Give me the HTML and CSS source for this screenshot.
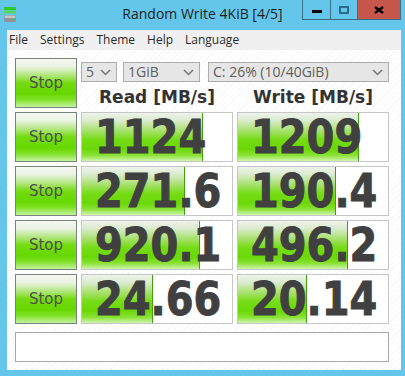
FILE: index.html
```html
<!DOCTYPE html>
<html lang="en">
<head>
    <meta charset="UTF-8">
    <title>Random Write 4KiB [4/5]</title>
    <link rel="stylesheet" href="styles.css">
</head>
<body>
<div class="titlebar">
    <div class="app-icon">
        <svg width="12" height="16" viewBox="0 0 12 16">
            <rect x="0" y="0" width="12" height="3" fill="#2ec92e"/>
            <rect x="0" y="3.5" width="12" height="3" fill="#5ad85a"/>
            <rect x="0" y="8" width="12" height="7" rx="1.5" fill="#8f9496"/>
            <rect x="0.5" y="8.5" width="11" height="2.5" rx="1" fill="#c4c8ca"/>
            <rect x="8.5" y="11.5" width="2" height="1.5" fill="#3fd23f"/>
        </svg>
    </div>
    <div class="title">Random Write 4KiB [4/5]</div>
    <div class="controls">
        <span class="ctl ctl-min"><svg width="10" height="3"><rect width="10" height="3" fill="#000"/></svg></span>
        <span class="ctl ctl-max"><svg width="10" height="8"><rect x="1" y="1" width="8" height="6" fill="none" stroke="#2c6c8c" stroke-width="2"/></svg></span>
        <span class="ctl ctl-close"><svg width="10" height="8"><path d="M1 1 L9 7 M9 1 L1 7" stroke="#000" stroke-width="2.2"/></svg></span>
    </div>
</div>

<div class="menubar">
    <span>File</span>
    <span>Settings</span>
    <span>Theme</span>
    <span>Help</span>
    <span>Language</span>
</div>

<div class="client">
    <div class="board">
        <button class="stop">Stop</button>
        <div class="setup">
            <div class="combos">
                <div class="combo combo-count">5 <svg class="chev" width="11" height="7"><polyline points="1,1 5.5,5.5 10,1" fill="none" stroke="#777" stroke-width="1.5"/></svg></div>
                <div class="combo combo-size">1GiB <svg class="chev" width="11" height="7"><polyline points="1,1 5.5,5.5 10,1" fill="none" stroke="#777" stroke-width="1.5"/></svg></div>
                <div class="combo combo-drive">C: 26% (10/40GiB) <svg class="chev" width="11" height="7"><polyline points="1,1 5.5,5.5 10,1" fill="none" stroke="#777" stroke-width="1.5"/></svg></div>
            </div>
            <div class="heads">
                <div>Read [MB/s]</div>
                <div>Write [MB/s]</div>
            </div>
        </div>

        <button class="stop">Stop</button>
        <div class="meter"><div class="fill" style="width:121px"></div><span class="num">1124</span></div>
        <div class="meter"><div class="fill" style="width:121px"></div><span class="num">1209</span></div>

        <button class="stop">Stop</button>
        <div class="meter"><div class="fill" style="width:103px"></div><span class="num">271.6</span></div>
        <div class="meter"><div class="fill" style="width:98px"></div><span class="num">190.4</span></div>

        <button class="stop">Stop</button>
        <div class="meter"><div class="fill" style="width:118px"></div><span class="num">920.1</span></div>
        <div class="meter"><div class="fill" style="width:110px"></div><span class="num">496.2</span></div>

        <button class="stop">Stop</button>
        <div class="meter"><div class="fill" style="width:71px"></div><span class="num">24.66</span></div>
        <div class="meter"><div class="fill" style="width:69px"></div><span class="num">20.14</span></div>
    </div>
    <div class="comment"></div>
</div>
</body>
</html>
```

FILE: styles.css
```css
:root {
    --frame-color: #63c6ea;
    --frame-line: #3a6f88;
    --menu-color: #f0f0f0;
    --text-color: #333;
    --ui-font: 'Open Sans', 'Noto Sans', sans-serif;
    --num-font: 'DejaVu Sans', Verdana, sans-serif;
}
html, body {
    margin: 0;
    height: 376px;
    overflow: hidden;
}
body {
    background-color: var(--frame-color);
    font-family: var(--ui-font);
    color: var(--text-color);
}
.titlebar {
    height: 30px;
    display: grid;
    grid-template-columns: 1fr auto 1fr;
}
.app-icon {
    padding: 6px 0 0 4px;
}
.title {
    font-size: 14px;
    line-height: 28px;
    color: #1e1e1e;
}
.controls {
    justify-self: end;
    align-self: start;
    display: flex;
    height: 20px;
    margin-right: 4px;
    border: 1px solid var(--frame-line);
    border-top: none;
    box-sizing: border-box;
}
.ctl {
    display: flex;
    align-items: center;
    justify-content: center;
    height: 19px;
}
.ctl-min {
    width: 27px;
    border-right: 1px solid var(--frame-line);
}
.ctl-min svg { margin-top: 3px; }
.ctl-max {
    width: 26px;
    border-right: 1px solid var(--frame-line);
}
.ctl-close {
    width: 42px;
    background-color: #c7564d;
}
.menubar {
    height: 20px;
    margin: 0 4px 0 7px;
    background-color: var(--menu-color);
    display: flex;
    gap: 12px;
    padding-left: 2px;
    font-size: 12px;
    line-height: 20px;
    color: #2a2a2a;
}
.client {
    height: 320px;
    margin: 0 4px 0 7px;
    padding: 8px 0 0 8px;
    box-sizing: border-box;
    background: repeating-linear-gradient(135deg, #fff 0 3px, #f7f7f7 3px 4px);
}
.board {
    display: grid;
    grid-template-columns: 62px 152px 152px;
    grid-auto-rows: 50px;
    gap: 4px;
}
.stop {
    margin: 0;
    padding: 0;
    border: 1px solid #76847a;
    background: linear-gradient(to bottom, #f6f7f4 0%, #eaf3e2 16%, #b0e67c 34%, #74dc12 50%, #66d800 72%, #7ee024 84%, #c4f2a0 100%);
    font-family: var(--num-font);
    font-size: 15px;
    color: #4e4e4e;
    cursor: pointer;
}
.setup {
    grid-column: 2 / 4;
}
.combos {
    display: flex;
    margin-top: 4px;
    height: 20px;
}
.combo {
    display: flex;
    align-items: center;
    justify-content: space-between;
    box-sizing: border-box;
    height: 20px;
    padding: 0 5px 0 4px;
    border: 1px solid #acacac;
    background-color: #e6e6e6;
    font-size: 14px;
    line-height: 18px;
    color: #5e5e5e;
    white-space: nowrap;
}
.combo-count { width: 36px; }
.combo-size { width: 77px; margin-left: 6px; }
.combo-drive { width: 181px; margin-left: 8px; }
.heads {
    display: grid;
    grid-template-columns: 152px 152px;
    gap: 4px;
    margin-top: 4px;
    font-family: var(--num-font);
    font-weight: bold;
    font-size: 17px;
    line-height: 22px;
    text-align: center;
    color: #333;
}
.meter {
    position: relative;
    box-sizing: border-box;
    border: 1px solid #c6c6c6;
    background-color: #fff;
    padding-left: 13px;
}
.meter .fill {
    position: absolute;
    left: 0;
    top: 0;
    bottom: 0;
    box-sizing: border-box;
    border-right: 1px solid #3f9e12;
    background: linear-gradient(to bottom, #eef2ec 0%, #dcecd0 15%, #a4e068 38%, #76dc16 55%, #6ad806 75%, #8ae234 88%, #d0f4b0 100%);
}
.meter .num {
    position: relative;
    display: inline-block;
    font-family: var(--num-font);
    font-weight: bold;
    font-size: 47px;
    line-height: 47px;
    color: #404040;
    -webkit-text-stroke: 1px #404040;
    transform: scaleX(0.85);
    transform-origin: 0 0;
    white-space: nowrap;
}
.comment {
    width: 374px;
    height: 30px;
    margin-top: 8px;
    box-sizing: border-box;
    border: 1px solid #a8a8a8;
    background-color: #fff;
}
```
